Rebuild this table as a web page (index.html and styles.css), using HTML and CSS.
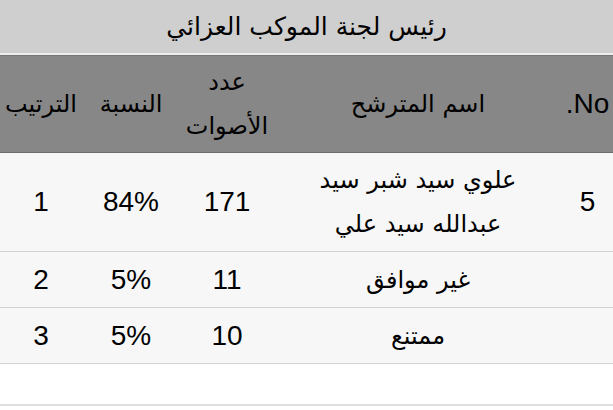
FILE: index.html
```html
<!DOCTYPE html>
<html lang="ar" dir="rtl">
<head>
<meta charset="utf-8">
<title>رئيس لجنة الموكب العزائي</title>
<link rel="stylesheet" href="styles.css">
</head>
<body>
<div class="title">رئيس لجنة الموكب العزائي</div>
<table class="results">
  <colgroup>
    <col class="c-no">
    <col class="c-name">
    <col class="c-count">
    <col class="c-pct">
    <col class="c-rank">
  </colgroup>
  <thead>
    <tr class="head">
      <th class="latin">No.</th>
      <th>اسم المترشح</th>
      <th class="wrap">عدد<br>الأصوات</th>
      <th>النسبة</th>
      <th>الترتيب</th>
    </tr>
  </thead>
  <tbody>
    <tr class="row tall">
      <td class="latin">5</td>
      <td class="name">علوي سيد شبر سيد<br>عبدالله سيد علي</td>
      <td class="latin">171</td>
      <td class="latin">84%</td>
      <td class="latin">1</td>
    </tr>
    <tr class="row">
      <td class="latin"></td>
      <td class="name">غير موافق</td>
      <td class="latin">11</td>
      <td class="latin">5%</td>
      <td class="latin">2</td>
    </tr>
    <tr class="row">
      <td class="latin"></td>
      <td class="name">ممتنع</td>
      <td class="latin">10</td>
      <td class="latin">5%</td>
      <td class="latin">3</td>
    </tr>
    <tr class="empty">
      <td></td><td></td><td></td><td></td><td></td>
    </tr>
  </tbody>
</table>
</body>
</html>
```

FILE: styles.css
```css
html, body {
  margin: 0;
  padding: 0;
  background: #ffffff;
}

body {
  width: 613px;
  height: 410px;
  overflow: hidden;
  font-family: "DejaVu Sans", "Liberation Sans", sans-serif;
  color: #000;
}

.title {
  height: 53px;
  line-height: 53px;
  background: #cfcfcf;
  text-align: center;
  font-size: 25px;
  border-bottom: 2px solid #ededed;
}

.results {
  width: 613px;
  table-layout: fixed;
  border-collapse: collapse;
  border-spacing: 0;
}

.c-no { width: 51px; }
.c-name { width: 288px; }
.c-count { width: 94px; }
.c-pct { width: 98px; }
.c-rank { width: 82px; }

.results th,
.results td {
  padding: 0;
  text-align: center;
  vertical-align: middle;
  font-weight: normal;
  font-size: 24px;
  overflow: visible;
  white-space: nowrap;
}

.head th {
  height: 96px;
  background: #878787;
  border-top: 1px solid #767676;
  border-bottom: 1px solid #6e6e6e;
}

.head th.wrap {
  line-height: 44px;
}

.latin {
  font-family: "Liberation Sans", sans-serif;
  font-size: 28px !important;
}

.row td {
  background: #f7f7f7;
  height: 55px;
  border-bottom: 1px solid #d3d3d3;
}

.row.tall td {
  height: 98px;
  border-top: 1px solid #dcdcdc;
}

.row .name {
  line-height: 44px;
}

.empty td {
  height: 40px;
  background: #ffffff;
  border-top: 1px solid #e6e6e6;
  border-bottom: 2px solid #dedede;
}
```
